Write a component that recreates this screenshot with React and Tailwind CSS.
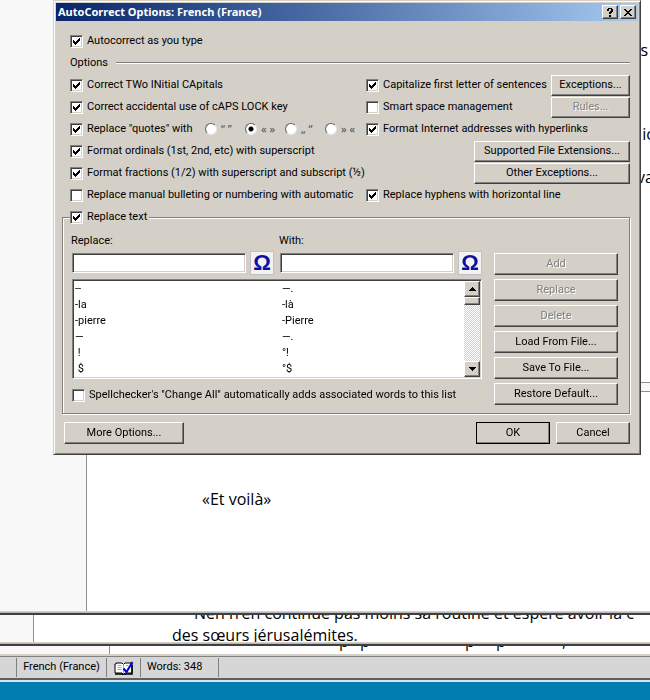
import { useState } from "react";
import clsx from "clsx";

const ENTRIES = [
  ["--", "—."],
  ["-la", "-là"],
  ["-pierre", "-Pierre"],
  ["—", "—."],
  ["\u00a0!", "°!"],
  ["\u00a0$", "°$"],
];

const QUOTES = ["“ ”", "« »", "„ “", "» «"];

const raised =
  "border border-t-white border-l-white border-r-[#404040] border-b-[#404040] shadow-[inset_-1px_-1px_0_#808080]";
const sunken =
  "border border-t-[#808080] border-l-[#808080] border-r-white border-b-white shadow-[inset_1px_1px_0_#404040,inset_-1px_-1px_0_#d4d0c8]";

function Button({ children, className, disabled, isDefault }) {
  return (
    <button
      type="button"
      disabled={disabled}
      className={clsx(
        "flex shrink-0 items-center justify-center bg-[#d4d0c8] whitespace-nowrap",
        raised,
        disabled && "text-[#808080] [text-shadow:1px_1px_0_#fff]",
        isDefault && "outline outline-black -outline-offset-1",
        className
      )}
    >
      {children}
    </button>
  );
}

function Check({ label, defaultChecked, className }) {
  return (
    <label className={clsx("flex items-center gap-1 whitespace-nowrap", className)}>
      <span className="relative flex">
        <input
          type="checkbox"
          defaultChecked={defaultChecked}
          className={clsx("peer size-[13px] appearance-none bg-white", sunken)}
        />
        <svg
          viewBox="0 0 13 13"
          className="pointer-events-none absolute inset-0 hidden size-[13px] peer-checked:block"
          shapeRendering="crispEdges"
        >
          <path d="M3 5h1v1h1v1h1v-1h1v-1h1v-1h1v-1h1v3h-1v1h-1v1h-1v1h-1v1h-1v-1h-1v-1h-1z" fill="#000" />
        </svg>
      </span>
      {label}
    </label>
  );
}

function Row({ children }) {
  return <div className="flex h-[22px] items-center pl-2">{children}</div>;
}

function SymbolButton({ label }) {
  return (
    <button
      type="button"
      aria-label={label}
      className="flex size-6 shrink-0 items-center justify-center border border-[#c0c0c8] bg-[#f2f2f2] font-['Liberation_Sans',sans-serif] text-[22px] leading-none font-bold text-[#10109c]"
    >
      Ω
    </button>
  );
}

function ScrollArrow({ up }) {
  return (
    <button
      type="button"
      aria-label={up ? "Scroll up" : "Scroll down"}
      className={clsx("flex size-4 items-center justify-center bg-[#d4d0c8]", raised)}
    >
      <svg viewBox="0 0 7 4" className="h-1 w-[7px]" shapeRendering="crispEdges">
        <path d={up ? "M3 0h1v1h1v1h1v1h1v1H0V3h1V2h1V1h1z" : "M0 0h7v1H6v1H5v1H4v1H3V3H2V2H1V1H0z"} />
      </svg>
    </button>
  );
}

function ReplaceField({ id, label, value, onChange, autoFocus }) {
  return (
    <div className="flex-1">
      <label htmlFor={id} className="-ml-px block h-[23px] leading-[25px]">
        {label}
      </label>
      <div className="flex items-center gap-1">
        <input
          id={id}
          type="text"
          value={value}
          autoFocus={autoFocus}
          onChange={(e) => onChange(e.target.value)}
          className={clsx("h-5 w-full min-w-0 bg-white px-[3px] outline-none", sunken)}
        />
        <SymbolButton label={"Symbol for " + label} />
      </div>
    </div>
  );
}

function EntryList() {
  return (
    <div className={clsx("mt-1 flex bg-white p-px", sunken)}>
      <table className="w-full table-fixed self-start">
        <tbody>
          {ENTRIES.map(([from, to], i) => (
            <tr key={i} className="h-4 leading-4">
              <td className="p-0 pl-px">{from}</td>
              <td className="w-[182px] p-0">{to}</td>
            </tr>
          ))}
        </tbody>
      </table>
      <div className="flex w-4 shrink-0 flex-col bg-[repeating-conic-gradient(#fff_0_25%,#d4d0c8_0_50%)] bg-[length:2px_2px]">
        <ScrollArrow up />
        <div className={clsx("h-2 bg-[#d4d0c8]", raised)} />
        <div className="flex-1" />
        <ScrollArrow />
      </div>
    </div>
  );
}

function AutoCorrectDialog() {
  const [quote, setQuote] = useState(1);
  const [replace, setReplace] = useState("");
  const [withText, setWithText] = useState("");

  return (
    <div className="absolute top-0 right-[9px] left-[53px] border border-t-[#d4d0c8] border-r-[#404040] border-b-[#404040] border-l-[#d4d0c8] bg-[#d4d0c8] p-0.5 font-[Tahoma,Roboto,sans-serif] text-[11px] leading-4 shadow-[inset_1px_1px_0_#fff,inset_-1px_-1px_0_#808080]">
      <div className="flex h-[18px] items-center bg-linear-to-r from-[#0a246a] to-[#a6caf0] pr-0.5 pl-0.5 font-[Tahoma,'Noto_Sans',sans-serif] font-bold text-white">
        <h1 className="flex-1">AutoCorrect Options: French (France)</h1>
        <Button className="mr-0.5 h-[14px] w-4 text-black">
          <svg viewBox="0 0 7 9" className="h-[9px] w-[7px]" shapeRendering="crispEdges">
            <path d="M1 0h4v1h1v3h-1v1h-1v1h-2v-2h1v-1h1v-2h-2v2h-2v-2h1zM2 7h2v2h-2z" />
          </svg>
        </Button>
        <Button className="h-[14px] w-4 text-black">
          <svg viewBox="0 0 8 7" className="h-[7px] w-2" shapeRendering="crispEdges">
            <path d="M0 0h2v1h1v1h2v-1h1v-1h2v1h-1v1h-1v1h-1v1h1v1h1v1h1v1h-2v-1h-1v-1h-2v1h-1v1h-2v-1h1v-1h1v-1h1v-1h-1v-1h-1v-1h-1z" />
          </svg>
        </Button>
      </div>

      <div className="pt-[9px] pr-2 pb-2 pl-1.5">
        <Row>
          <Check label="Autocorrect as you type" defaultChecked />
        </Row>
        <Row>
          <span>Options</span>
          <span className="ml-2 h-0.5 flex-1 border-t border-b border-t-[#808080] border-b-white" />
        </Row>

        <Row>
          <Check className="w-[296px] shrink-0" label="Correct TWo INitial CApitals" defaultChecked />
          <Check className="flex-1" label="Capitalize first letter of sentences" defaultChecked />
          <Button className="h-[21px] w-[79px]">Exceptions...</Button>
        </Row>
        <Row>
          <Check className="w-[296px] shrink-0" label="Correct accidental use of cAPS LOCK key" defaultChecked />
          <Check className="flex-1" label="Smart space management" />
          <Button className="h-[21px] w-[79px]" disabled>
            Rules...
          </Button>
        </Row>
        <Row>
          <Check className="w-[135px] shrink-0" label={'Replace "quotes" with'} defaultChecked />
          {QUOTES.map((q, i) => (
            <label
              key={q}
              className="flex w-10 shrink-0 items-center gap-1 font-[Tahoma,'Noto_Sans',sans-serif] whitespace-nowrap text-[#505050]"
            >
              <input
                type="radio"
                name="quotes"
                checked={quote === i}
                onChange={() => setQuote(i)}
                className="size-3 appearance-none rounded-full border border-t-[#606060] border-r-[#e8e8e8] border-b-[#e8e8e8] border-l-[#606060] bg-white checked:bg-[radial-gradient(circle,#000_2px,#fff_3px)]"
              />
              {q}
            </label>
          ))}
          <Check className="ml-px" label="Format Internet addresses with hyperlinks" defaultChecked />
        </Row>
        <Row>
          <Check className="flex-1" label="Format ordinals (1st, 2nd, etc) with superscript" defaultChecked />
          <Button className="h-[21px] w-[156px]">Supported File Extensions...</Button>
        </Row>
        <Row>
          <Check className="flex-1" label="Format fractions (1/2) with superscript and subscript (½)" defaultChecked />
          <Button className="h-[21px] w-[156px]">Other Exceptions...</Button>
        </Row>
        <Row>
          <Check className="w-[296px] shrink-0" label="Replace manual bulleting or numbering with automatic" />
          <Check label="Replace hyphens with horizontal line" defaultChecked />
        </Row>

        <fieldset className="min-w-0 border border-[#808080] shadow-[1px_1px_0_#fff,inset_1px_1px_0_#fff]">
          <legend className="ml-[7px] flex h-[22px] items-center bg-[#d4d0c8] pr-0.5">
            <Check label="Replace text" defaultChecked />
          </legend>
          <div className="flex gap-3 pr-[11px] pb-2 pl-[9px]">
            <div className="min-w-0 flex-1">
              <div className="flex gap-1.5">
                <ReplaceField id="replace" label="Replace:" value={replace} onChange={setReplace} autoFocus />
                <ReplaceField id="with" label="With:" value={withText} onChange={setWithText} />
              </div>
              <EntryList />
              <Check
                className="mt-2"
                label={'Spellchecker\'s "Change All" automatically adds associated words to this list'}
              />
            </div>
            <div className="flex w-[124px] shrink-0 flex-col gap-1 pt-[25px]">
              <Button className="h-[22px]" disabled>Add</Button>
              <Button className="h-[22px]" disabled>Replace</Button>
              <Button className="h-[22px]" disabled>Delete</Button>
              <Button className="h-[22px]">Load From File...</Button>
              <Button className="h-[22px]">Save To File...</Button>
              <Button className="h-[22px]">Restore Default...</Button>
            </div>
          </div>
        </fieldset>

        <div className="mt-2 flex gap-1.5 pl-0.5">
          <Button className="mr-auto h-[22px] w-[120px]">More Options...</Button>
          <Button className="h-[22px] w-[74px]" isDefault>OK</Button>
          <Button className="h-[22px] w-[74px]">Cancel</Button>
        </div>
      </div>
    </div>
  );
}

function WindowEdge() {
  return <div className="h-1 shrink-0 border-t border-b-2 border-t-[#d4d0c8] border-b-[#404040] bg-[#b8b8b8]" />;
}

function StatusBar() {
  return (
    <footer className="flex h-6 shrink-0 items-stretch border-t border-b-2 border-t-[#808080] border-b-[#606060] bg-[#d6d6d6] py-px font-[Tahoma,Roboto,sans-serif] text-[11px]">
      <span className="w-[17px] border-r border-[#808080]" />
      <span className="flex w-[90px] items-center justify-center border-r border-[#808080] whitespace-nowrap">
        French (France)
      </span>
      <span className="flex w-[34px] items-center justify-center border-r border-[#808080]">
        <svg viewBox="0 0 20 14" className="h-[14px] w-5">
          <path d="M1 3h1v-1h6l1.500 1.500L11 2h6v1h1v9h-7l-1 1H9l-1-1H1z" fill="#fff" stroke="#000" />
          <path d="M1 13h7l1 1h2l1-1h6V4" fill="none" stroke="#000" strokeWidth="1.500" />
          <path d="M9.500 3.500V12M3.500 4.500h4M3.500 6.500h4M3.500 8.500h4M11.500 4.500h3" stroke="#aaa" fill="none" />
          <path d="M9.500 7.500l3 3.500L18.500 1" fill="none" stroke="#0000d0" strokeWidth="2" />
        </svg>
      </span>
      <span className="flex w-[78px] items-center border-r border-[#808080] pl-1.5">Words: 348</span>
    </footer>
  );
}

export default function App() {
  return (
    <div className="relative flex h-screen flex-col overflow-hidden bg-white font-['Segoe_UI','Open_Sans',sans-serif] text-base text-black">
      {/* front document */}
      <main className="flex min-h-0 flex-1">
        <div className="w-[87px] shrink-0 border-r border-[#909090] bg-[#f8f8f8]" />
        <div className="flex-1">
          <div className="-mr-1 h-[382px] pt-10 text-right leading-[21px]">
            <p className="h-[84px] pr-1.5">s</p>
            <p className="h-[43px]">ic</p>
            <p>va</p>
          </div>
          <div className="h-[10px] border-y border-[#909090] bg-[#f8f8f8]" />
          <p className="pt-24 pl-[115px] leading-[22px]">«Et voilà»</p>
        </div>
      </main>
      <WindowEdge />

      {/* second document, mostly covered */}
      <section className="flex h-[27px] shrink-0 overflow-hidden">
        <div className="w-[34px] shrink-0 border-r border-[#909090] bg-[#f8f8f8]" />
        <div className="-mt-[13px] pl-[138px] leading-[22px] whitespace-nowrap">
          <p className="pl-[22px]">Nen n’en continue pas moins sa routine et espère avoir la c</p>
          <p>des sœurs jérusalémites.</p>
        </div>
      </section>
      <WindowEdge />

      <section className="flex h-2 shrink-0 overflow-hidden">
        <div className="w-[110px] shrink-0 border-r border-[#909090] bg-[#f8f8f8]" />
        <p className="-mt-4 flex pl-[229px] leading-[22px]">
          <span className="w-[21px]">p</span>
          <span className="w-[105px]">p</span>
          <span className="w-[31px]">p</span>
          <span className="w-[66px]">p</span>
          <span>,</span>
        </p>
      </section>
      <div className="h-0.5 shrink-0 bg-[#d4d0c8]" />
      <StatusBar />
      <div className="h-0.5 shrink-0 bg-[#d8e4ec]" />
      <div className="h-[18px] shrink-0 bg-[#007cb0]" />

      <AutoCorrectDialog />
    </div>
  );
}
